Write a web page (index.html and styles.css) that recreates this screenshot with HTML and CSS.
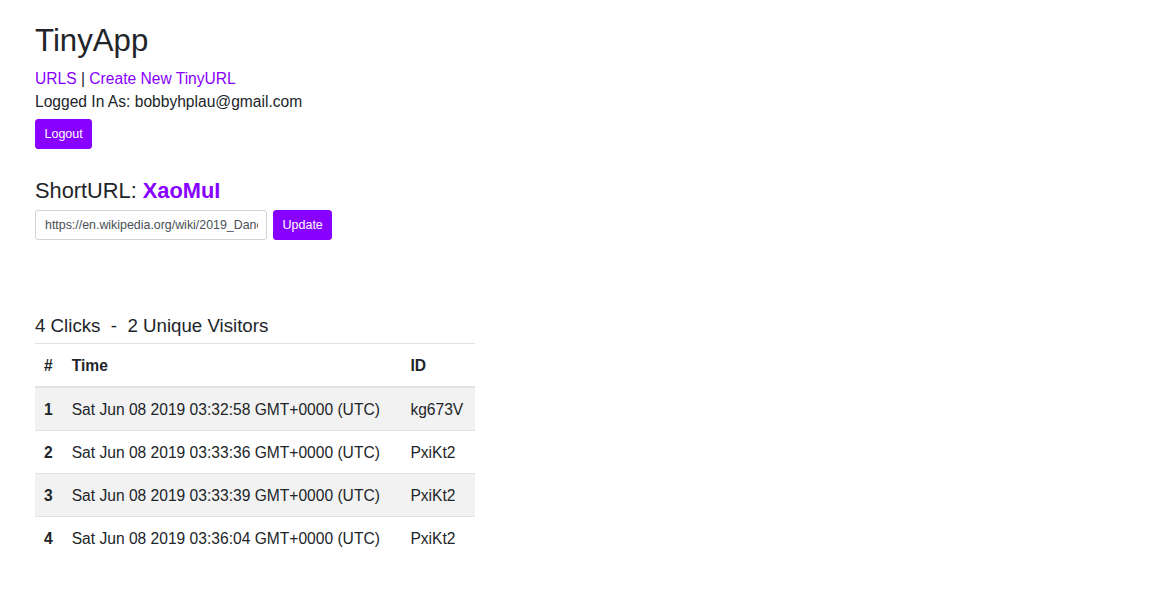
FILE: index.html
```html
<!DOCTYPE html>
<html lang="en">
<head>
<meta charset="utf-8">
<title>TinyApp</title>
<link rel="stylesheet" href="styles.css">
</head>
<body>
<div class="container">
  <header class="header">
    <h2 class="brand">TinyApp</h2>
    <nav class="nav"><a href="#">URLS</a> | <a href="#">Create New TinyURL</a></nav>
    <p class="user">Logged In As: bobbyhplau@gmail.com</p>
    <button class="btn btn-logout" type="button">Logout</button>
  </header>

  <section class="edit">
    <h4 class="short-title">ShortURL: <span class="short-id">XaoMuI</span></h4>
    <form class="edit-form">
      <input class="url-input" type="text" value="https://en.wikipedia.org/wiki/2019_Dane_Cup">
      <button class="btn btn-update" type="button">Update</button>
    </form>
  </section>

  <section class="stats">
    <h5 class="stats-title">4 Clicks &nbsp;-&nbsp; 2 Unique Visitors</h5>
    <table class="visits">
      <thead>
        <tr><th>#</th><th>Time</th><th>ID</th></tr>
      </thead>
      <tbody>
        <tr><th>1</th><td>Sat Jun 08 2019 03:32:58 GMT+0000 (UTC)</td><td>kg673V</td></tr>
        <tr><th>2</th><td>Sat Jun 08 2019 03:33:36 GMT+0000 (UTC)</td><td>PxiKt2</td></tr>
        <tr><th>3</th><td>Sat Jun 08 2019 03:33:39 GMT+0000 (UTC)</td><td>PxiKt2</td></tr>
        <tr><th>4</th><td>Sat Jun 08 2019 03:36:04 GMT+0000 (UTC)</td><td>PxiKt2</td></tr>
      </tbody>
    </table>
  </section>
</div>
</body>
</html>
```

FILE: styles.css
```css
* { box-sizing: border-box; }
html, body { margin: 0; padding: 0; background: #fff; }
body {
  font-family: "Liberation Sans", Arial, sans-serif;
  font-size: 15.6px;
  line-height: 1.5;
  color: #212529;
}
.container {
  padding: 22px 35px 0 35px;
}
.brand {
  margin: 0 0 8px 0;
  font-size: 31.2px;
  font-weight: 400;
  line-height: 1.2;
}
.nav { margin: 0; line-height: 23px; }
.nav a { color: #8800ff; text-decoration: none; }
.user { margin: 0 0 6px 0; line-height: 23px; }
.btn {
  display: inline-block;
  font-family: inherit;
  font-size: 12.5px;
  line-height: 20px;
  padding: 4px 8.5px;
  color: #fff;
  background: #8800ff;
  border: 1px solid #8800ff;
  border-radius: 3px;
  cursor: pointer;
}
.btn-logout { height: 30px; }
.edit { margin-top: 28px; }
.short-title {
  margin: 0 0 5px 0;
  font-size: 21.8px;
  font-weight: 400;
  line-height: 28px;
}
.short-id { color: #8800ff; font-weight: 700; }
.edit-form { display: flex; gap: 6px; margin: 0; }
.url-input {
  width: 232px;
  height: 30px;
  padding: 4px 8px 4px 9px;
  font-family: inherit;
  font-size: 12.4px;
  color: #495057;
  border: 1px solid #ced4da;
  border-radius: 3px;
}
.btn-update { height: 30px; }
.stats { margin-top: 74px; }
.stats-title {
  margin: 0 0 5px 0;
  font-size: 18.7px;
  font-weight: 400;
  line-height: 24px;
}
.visits {
  width: 440px;
  border-collapse: collapse;
}
.visits th, .visits td {
  padding: 10px 9px 9px 9px;
  line-height: 23px;
  text-align: left;
  border-top: 1px solid #dee2e6;
  vertical-align: top;
}
.visits th { font-weight: 700; }
.visits thead th { border-bottom: 2px solid #dee2e6; }
.visits tbody tr:nth-child(odd) { background: #f2f2f2; }
```
